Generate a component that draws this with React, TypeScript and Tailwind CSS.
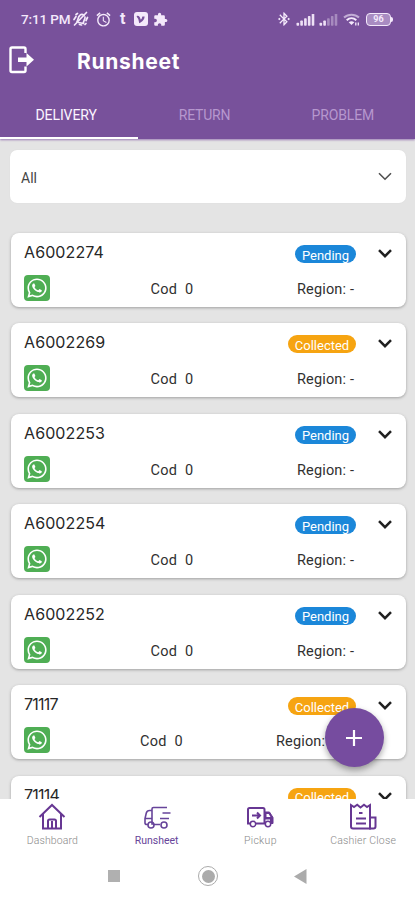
import React from "react";
import { FaWhatsapp } from "react-icons/fa";
import { MdAlarm, MdBluetoothConnected, MdExtension } from "react-icons/md";

type Order = { id: string; status: "Pending" | "Collected"; wide?: boolean };

const orders: Order[] = [
  { id: "A6002274", status: "Pending" },
  { id: "A6002269", status: "Collected" },
  { id: "A6002253", status: "Pending" },
  { id: "A6002254", status: "Pending" },
  { id: "A6002252", status: "Pending" },
  { id: "71117", status: "Collected", wide: true },
  { id: "71114", status: "Collected", wide: true },
];

function MutedBell() {
  return (
    <svg width="17" height="16" viewBox="0 0 17 16" fill="none" stroke="currentColor" strokeWidth="1.7" strokeLinecap="round">
      <path d="M5 10.5C6.5 9 5.500 6 8 4.200C9.500 3 11 3.500 12 4.500M13 6C13.500 8 11 10 11.500 12.500L6.500 11.500" />
      <path d="M2.500 14L14.500 1.500M7.500 13.500L9.500 14M2 8.500L4 5.500M15.500 6.500L14 9.500M4 3.500L5.500 2.500M14 12.500L13 13.500" />
    </svg>
  );
}

function Signal({ level }: { level: number }) {
  return (
    <svg width="19" height="13" viewBox="0 0 19 13" fill="currentColor">
      {[0, 1, 2, 3, 4].map((i) => (
        <rect key={i} x={0.5 + i * 3.8} y={9.7 - i * 2.2} width="2.600" height={3 + i * 2.2} rx="0.700" opacity={i < level ? 0.95 : 0.38} />
      ))}
    </svg>
  );
}

function Wifi() {
  return (
    <svg width="17" height="13" viewBox="0 0 17 13" fill="none" stroke="currentColor" strokeWidth="2">
      <path d="M1 4.600C5.200 0.700 11.800 0.700 16 4.600" opacity="0.600" />
      <path d="M3.700 7.200C6.500 4.700 10.500 4.700 13.300 7.200" />
      <path d="M5.700 9.200Q8.500 7.200 11.300 9.200L8.500 12Z" fill="currentColor" stroke="none" />
      <path d="M12.800 9.500V12.500M15.300 9.500V12.500" strokeWidth="1.300" />
    </svg>
  );
}

function StatusBar() {
  return (
    <div className="flex h-[38px] items-center pl-[21px] pr-[22px] text-[#f4e9fb]">
      <span className="w-[51px] whitespace-nowrap font-[Roboto] text-[13.500px] font-medium tracking-[-0.150px]">7:11 PM</span>
      <MutedBell />
      <MdAlarm className="ml-[6px] size-[17px]" />
      <span className="ml-[8px] w-[7px] font-[Roboto] text-[16px] font-bold leading-none">t</span>
      <span className="ml-[7px] flex size-[14px] items-center justify-center rounded-[3px] bg-[#f4e9fb] text-[#78519b]">
        <svg width="10" height="9" viewBox="0 0 10 9" fill="none" stroke="currentColor" strokeWidth="2.200"><path d="M1 2Q3 1 4 6.500Q7.500 4.500 7.500 1.500" /></svg>
      </span>
      <MdExtension className="ml-[5px] size-[15px]" />
      <div className="ml-auto flex items-center">
        <MdBluetoothConnected className="size-[16px]" />
        <div className="ml-[4px] flex gap-[4px]"><Signal level={5} /><Signal level={2} /></div>
        <div className="ml-[5px]"><Wifi /></div>
        <div className="ml-[6px] flex h-[13px] w-[25px] items-center justify-center rounded-[4px] border-[1.500px] border-[#f4e9fb] bg-[#a98cc2] pt-px font-[Roboto] text-[9px] font-bold leading-none">96</div>
        <div className="h-[5px] w-[2px] rounded-r bg-[#f4e9fb]" />
      </div>
    </div>
  );
}

function Header() {
  return (
    <header className="h-[139px] shrink-0 bg-[#78519b] text-white shadow-[0_1px_2px_#9b7bb5]">
      <StatusBar />
      <div className="flex h-[46px] items-center pl-[9px]">
        <svg width="26" height="28" viewBox="0 0 26 28" className="-mt-[3px]">
          <path d="M16.500 7V3Q16.500 1.500 15 1.500H3Q1.500 1.500 1.500 3V24.500Q1.500 26 3 26H15Q16.500 26 16.500 24.500V20.500" fill="none" stroke="white" strokeWidth="2.400" />
          <path d="M9 11.500H17.500V7L25 13.700L17.500 20.500V16H9Z" fill="white" />
        </svg>
        <h1 className="ml-[42px] mt-px whitespace-nowrap font-[Inter] text-[21px] font-bold leading-none tracking-[0.700px]">Runsheet</h1>
      </div>
      <nav className="grid h-[55px] grid-cols-3 text-center font-[Roboto] text-[14px] leading-none">
        <div className="border-b-2 border-white pr-[6px] pt-[24px] tracking-[-0.100px] text-[#fbf5ff]">DELIVERY</div>
        <div className="pr-[6px] pt-[24px] tracking-[-0.200px] text-[#b697ce]">RETURN</div>
        <div className="pr-[6px] pt-[24px] tracking-[-0.150px] text-[#b697ce]">PROBLEM</div>
      </nav>
    </header>
  );
}

function Chevron({ bold = false }: { bold?: boolean }) {
  return (
    <svg width="14" height="9" viewBox="0 0 14 9" fill="none" stroke={bold ? "#202020" : "#505050"} strokeWidth={bold ? 2.5 : 1.6}>
      <path d="M1 1.200L7 7.200L13 1.200" />
    </svg>
  );
}

function OrderCard({ order }: { order: Order }) {
  return (
    <article className="flex h-[74px] shrink-0 flex-col rounded-[8px] bg-white pl-[13px] pr-[14px] shadow-[0_1px_3px_#a0a0a0]">
      <div className="flex h-[41px] items-center">
        <span className={`-mt-[3px] font-[Inter] text-[16px] leading-none text-[#272727] ${order.id.length > 5 ? "tracking-[0.100px]" : "tracking-[-0.750px]"}`}>{order.id}</span>
        <span className={`ml-auto mt-px flex h-[18px] items-center justify-center rounded-full pt-[2px] font-[Roboto] text-[13px] leading-none text-white ${order.status === "Pending" ? "w-[61px] bg-[#1b87d9]" : "w-[68px] bg-[#f6a411]"}`}>{order.status}</span>
        <span className="ml-[22px]"><Chevron bold /></span>
      </div>
      <div className="flex h-[28px] items-center justify-between pr-[36px] font-[Roboto] text-[14.500px] leading-none text-[#303030]">
        <span className="flex size-[26px] items-center justify-center rounded-[4px] bg-[#4fae54] text-white"><FaWhatsapp className="size-[22px]" /></span>
        <span className="ml-[-3px] whitespace-pre pt-[4px] tracking-[0.300px]">Cod  0</span>
        <span className={`whitespace-nowrap pt-[4px] tracking-[0.150px] ${order.wide ? "w-[80px]" : "w-[59px]"}`}>Region: -</span>
      </div>
    </article>
  );
}

function HomeIcon() {
  return (
    <svg width="28" height="28" viewBox="0 0 28 28" fill="none" stroke="#673793" strokeWidth="2">
      <path d="M1.500 14L14 2L26.500 14M5 11V25.500H23V11M10 25V18Q10 16.500 11.500 16.500H16.500Q18 16.500 18 18V25M14 18V25" />
    </svg>
  );
}

function RunsheetIcon() {
  return (
    <svg width="28" height="28" viewBox="0 0 28 28" fill="none" stroke="#67449a" strokeWidth="1.600">
      <path d="M24 4.500H10.500Q9 4.500 9 6V21H11M9 7.500H6.500Q4 7.500 3.300 10L2 15.500V20Q2 21.500 4 21.500H5M2.500 15.500H8.500M11 21.500H17" />
      <path d="M19.500 10H27.500M17 15.500H26" />
      <circle cx="8" cy="22" r="3" /><circle cx="21" cy="22" r="3" />
    </svg>
  );
}

function PickupIcon() {
  return (
    <svg width="28" height="28" viewBox="0 0 28 28" fill="none" stroke="#673793" strokeWidth="2">
      <path d="M4 20.500H2V6.500Q2 5 3.500 5H17Q18.500 5 18.500 6.500V20.500H10" />
      <path d="M6 12.500H13M11 9.500L14 12.500L11 15.500" />
      <path d="M18.500 9H23.500L27 14.500V20.500H24.500V16H18.500Z" fill="#673793" strokeWidth="1" />
      <path d="M20.500 11H22.700L24.500 14H20.500Z" fill="white" stroke="none" />
      <circle cx="7" cy="21" r="2.700" fill="white" strokeWidth="1.500" /><circle cx="22" cy="21" r="2.700" fill="white" strokeWidth="1.500" />
    </svg>
  );
}

function CashierIcon() {
  return (
    <svg width="28" height="28" viewBox="0 0 28 28" fill="none" stroke="#673793" strokeWidth="2">
      <path d="M2 2L5 4L8.200 1.800L11.500 4.500L15 1.800L18 4L21 2V25.500H4Q2 25.500 2 23.500Z" />
      <path d="M21 14.500H26.500V23.500Q26.500 25.500 24.500 25.500H20M7 15.500H17M7 20.500H17M10 10H13.500" />
    </svg>
  );
}

function BottomNav() {
  const label = "mt-[2px] whitespace-nowrap font-[Roboto] text-[10.500px] leading-[16px]";
  return (
    <footer className="h-[101px] shrink-0 bg-white">
      <nav className="grid h-[57px] grid-cols-4 pt-[4px]">
        <div className="flex flex-col items-center pl-px"><HomeIcon /><span className={`${label} font-light tracking-[0.100px] text-[#888888]`}>Dashboard</span></div>
        <div className="flex flex-col items-center pl-[2px]"><RunsheetIcon /><span className={`${label} text-[#67449a]`}>Runsheet</span></div>
        <div className="flex flex-col items-center pl-[2px]"><PickupIcon /><span className={`${label} font-light tracking-[0.300px] text-[#888888]`}>Pickup</span></div>
        <div className="flex flex-col items-center"><CashierIcon /><span className={`${label} font-light tracking-[0.200px] text-[#888888]`}>Cashier Close</span></div>
      </nav>
      <div className="flex h-[40px] items-center pl-[108px]">
        <span className="size-[12px] bg-[#b0b0b0]" />
        <span className="ml-[78px] flex size-[20px] items-center justify-center rounded-full border border-[#ababab]"><i className="size-[13px] rounded-full bg-[#ababab]" /></span>
        <svg className="ml-[76px]" width="13" height="15" viewBox="0 0 13 15"><path d="M0 7.500L12.500 0V15Z" fill="#ababab" /></svg>
      </div>
    </footer>
  );
}

export default function App() {
  return (
    <div className="relative flex h-[900px] w-[415px] flex-col overflow-hidden bg-[#e4e4e4] font-[Roboto]">
      <Header />
      <main className="min-h-0 flex-1 overflow-hidden pl-[10px] pr-[9px] pt-[11px]">
        <div className="flex h-[53px] items-center justify-between rounded-[7px] bg-white pl-[11px] pr-[14px] shadow-[0_0_1px_#d5d5d5]">
          <span className="pt-[3px] text-[14px] text-[#454545]">All</span><Chevron />
        </div>
        <section className="ml-px mt-[30px] flex flex-col gap-[16.450px]">
          {orders.map((order) => <OrderCard key={order.id} order={order} />)}
        </section>
      </main>
      <BottomNav />
      <button className="absolute left-[324.500px] top-[708px] flex size-[59px] items-center justify-center rounded-full bg-[#764c9f] shadow-[0_3px_6px_rgba(0,0,0,0.350)]" aria-label="Add">
        <svg width="18" height="18" viewBox="0 0 18 18" stroke="white" strokeWidth="2.200"><path d="M9 1V17M1 9H17" /></svg>
      </button>
    </div>
  );
}
